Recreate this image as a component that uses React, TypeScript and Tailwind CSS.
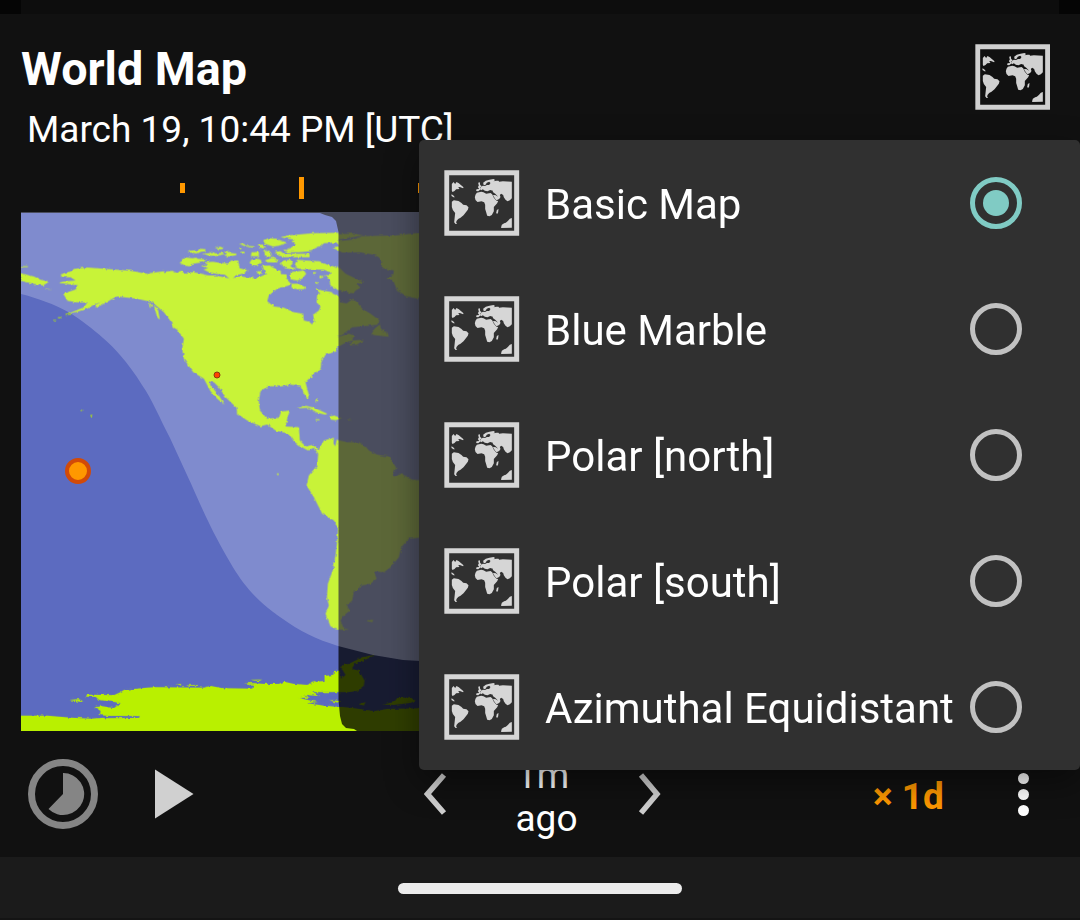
import React from "react";

const CONTINENTS =
  "M120 207L150 198 165 190 200 186 240 189 330 196 385 206 420 201 455 196 470 203 480 196 490 202 520 200 560 209 600 213 630 220 660 213 710 219 722 212 740 205 732 190 745 180 765 190 778 205 795 207 797 218 812 232 805 240 770 250 745 270 740 287 760 303 790 307 820 320 848 325 850 345 866 349 875 357 881 345 878 328 895 315 900 303 888 290 890 270 905 260 930 262 955 272 960 290 978 294 998 280 1012 293 1025 310 1050 325 1077 345 1070 358 1030 362 995 365 975 380 950 395 985 385 1000 390 995 405 975 412 950 425 948 437 915 448 902 470 900 490 875 510 855 530 860 550 867 575 860 580 848 560 840 543 810 537 780 543 750 542 735 547 720 557 715 585 718 615 740 640 775 637 782 618 808 615 800 640 795 663 835 665 838 705 855 723 880 718 895 733 910 705 940 697 939 715 945 722 948 703 980 710 1015 710 1035 723 1045 735 1070 748 1105 753 1127 787 1115 810 1125 815 1140 803 1175 823 1210 825 1210 995 1165 1000 1142 1025 1135 1055 1110 1085 1090 1100 1060 1097 1068 1120 1050 1135 1020 1140 1012 1155 1000 1155 995 1185 978 1200 988 1215 970 1230 960 1245 968 1265 985 1273 960 1273 930 1263 915 1225 925 1200 919 1175 922 1135 940 1085 948 1025 953 965 940 945 905 925 880 875 858 840 865 810 890 780 893 745 880 727 862 735 835 720 820 707 805 685 765 675 740 657 720 662 680 645 650 625 648 607 615 575 595 545 580 530 565 527 575 545 595 570 612 598 590 580 570 557 550 520 518 500 490 460 485 430 490 400 460 360 430 320 395 290 350 280 290 273 260 285 225 295 200 310 140 328 150 322 190 305 200 292 165 290 140 285 128 265 165 252 172 240 115 232 130 228 165 225 150 215 125 215Z";

const ISLANDS = [
  "M0 203L40 213 60 223 85 229 68 240 45 236 0 226Z",
  "M0 182H22V185H0Z",
  "M75 250L95 253 75 252Z",
  "M225 298L240 290 275 272 280 277 262 288 240 300 225 306Z",
  "M385 290L395 300 388 308ZM400 300L412 310 418 343 410 335Z",
  "M455 360L480 366 500 375 502 390 495 392 485 378 462 368Z",
  "M385 203L430 197 430 202 390 207Z",
  "M935 88L1000 84 1028 90 960 101 935 102ZM945 108L1000 102 1025 92 1080 91 1120 91 1210 80V270L1190 279 1160 273 1130 255 1118 225 1098 218 1118 208 1120 195 1088 188 1082 177 1085 168 1075 155 1060 148 1020 140 965 141 935 126 958 122Z",
  "M950 180L975 205 1000 217 1028 229 1010 237 1020 247 1005 255 998 264 950 252Z",
  "M1062 370L1078 357 1082 374 1100 380 1105 394 1052 388ZM995 405L1030 403 1010 417 990 420Z",
  "M828 608L850 601 880 606 920 625 915 628 890 622 865 607Z",
  "M930 632L940 630 965 639 945 644 930 642ZM885 641H897V644H885ZM982 642L995 644 980 645ZM885 582H889V590H885Z",
  "M1038 1245L1058 1243 1055 1250Z",
  "M181 612H184V617H181ZM210 628H214V634H210ZM770 803H774V809H770Z",
  "M135 325H151V328H135ZM114 334L122 338 112 338ZM101 343H106V346H101Z",
];

const ARCTIC_WEST = [
  "M36 80L48 75 68 74 72 70 90 71 90 77 76 79 66 84Z",
  "M118 67L135 64 144 68 132 72Z",
  "M82 84L100 83 110 79 120 84 142 82 145 86 120 92 98 90Z",
  "M145 78L154 76 162 82 182 84 182 89 160 93 146 90 155 84Z",
  "M12 112L22 105 18 98 30 96 52 98 62 96 66 100 92 102 82 110 52 115 42 123 28 120Z",
  "M88 110L112 109 130 112 158 114 166 106 188 105 192 128 215 134 212 142 180 150 168 165 155 154 148 148 120 145 100 140 84 132 98 128 76 121 95 117Z",
  "M98 150H128L130 154 100 156Z",
  "M190 55L205 55 210 60 235 63 232 67 208 62ZM192 66H197V71H192ZM195 79H207V84H195Z",
  "M228 80H250V92H226ZM250 60L265 58 264 68 252 66ZM265 42L272 42 272 52 265 52ZM262 76L272 72V82Z",
  "M228 103L250 100 255 110 245 122 230 120 222 112Z",
];

const ARCTIC_EAST = [
  "M75 50L95 45 130 42 170 38 250 37V65L205 68 198 75 178 84 165 92 130 95 98 95 85 90 108 80 120 72 108 62 118 58 100 55Z",
  "M25 60L38 53 62 55 82 62 95 67 72 75 52 78 28 70Z",
  "M5 74L18 72 32 80 22 83ZM0 94H8V106H0ZM26 96L40 90 48 100 44 110 30 106ZM58 94L75 92 85 100 162 100V110H90L70 106Z",
  "M72 130L84 120 105 118 112 128 104 138 122 144 112 148 92 143Z",
  "M118 132L125 118 150 120 192 122 205 130 235 138 250 145V210L225 195 222 178 205 164 222 164 225 156 205 148 170 146 140 148 122 142Z",
  "M105 155L145 150 152 160 140 175 125 180 105 176Z",
  "M108 190H128L150 200 145 206 125 206 108 202ZM174 155H181V160H174ZM192 166H202V173H192ZM180 185H187V190H180ZM180 205L200 210 230 215 230 225 195 220Z",
  "M28 120L50 112 72 120 58 126 35 125ZM20 135L45 136 55 150 75 150 78 170 30 158ZM5 152H20V160H5ZM0 122L15 117 18 124 5 132Z",
];

const ANTARCTICA =
  "M0 1530L80 1530 150 1536 210 1539 245 1537 270 1532 238 1529 240 1516 222 1505 245 1502 280 1508 300 1493 235 1483 225 1474 195 1473 200 1467 280 1469 300 1460 310 1453 380 1446 405 1445 550 1446 570 1441 605 1448 695 1449 700 1439 670 1432 700 1433 730 1435 775 1435 790 1428 820 1435 860 1438 880 1430 912 1426 912 1411 938 1408 940 1397 957 1395 962 1420 975 1408 968 1397 960 1380 985 1375 1025 1355 1063 1348 1040 1360 1005 1372 993 1390 1015 1395 1032 1425 1030 1440 1010 1456 985 1460 900 1460 875 1460 900 1472 875 1476 835 1477 890 1490 910 1500 958 1503 1000 1508 1060 1517 1100 1510 1210 1508V1590H0Z";

const ANTARCTIC_ISLANDS =
  "M145 1483L175 1481 188 1487 180 1489ZM465 1435L485 1436 480 1440ZM500 1438L530 1438 528 1441 505 1440ZM690 1422L725 1422 715 1427ZM1085 1497L1120 1490 1130 1478 1170 1475 1185 1485 1170 1492 1120 1498ZM1015 1495L1035 1490 1030 1500ZM870 1430L885 1426 882 1437ZM925 1482L960 1487 950 1491Z";

const INLETS =
  "M850 1468L960 1476V1485L880 1482ZM860 1493L960 1482 958 1503 910 1500ZM245 1531L358 1532 355 1537 250 1538Z";

function WorldMap() {
  return (
    <svg className="block h-[519px] w-[1038px]" viewBox="21 212 1038 519">
      <defs>
        <filter id="coast" x="0" y="200" width="1060" height="540" filterUnits="userSpaceOnUse">
          <feTurbulence type="fractalNoise" baseFrequency="0.25" numOctaves="2" seed="4" result="n" />
          <feDisplacementMap in="SourceGraphic" in2="n" scale="3" xChannelSelector="R" yChannelSelector="G" />
        </filter>
      </defs>
      <rect x="21" y="212" width="1038" height="519" fill="#5c6bc0" />
      <g filter="url(#coast)" transform="translate(0.500 0.500)">
        <g transform="translate(20 205) scale(.33333)" fill="#b9f000">
          <path d={CONTINENTS} />
          {ISLANDS.map((d) => (
            <path key={d} d={d} />
          ))}
          <g transform="translate(465 60)">
            {ARCTIC_WEST.map((d) => (
              <path key={d} d={d} />
            ))}
          </g>
          <g transform="translate(705 45)">
            {ARCTIC_EAST.map((d) => (
              <path key={d} d={d} />
            ))}
          </g>
          <path d={ANTARCTICA} />
          <path d={INLETS} fill="#5c6bc0" />
          <path d={ANTARCTIC_ISLANDS} />
        </g>
      </g>
      <path
        d="M21 212H1059V731H357L354 729 346 728 342 724 340 716 338.500 700V232L336 221 332 217 325 215 320 213H21Z"
        fill="#000"
        fillOpacity=".75"
      />
      <path
        d="M21 212H1059V661H420L403 660 373 655 338 646C316 639 301 632 280 617C250 596 238 577 223 550C204 515 197 496 187 475L170 438C160 419 152 399 142 385C131 367 117 350 103 338C93 329 80 319 70 313C54 304 37 298 21 294Z"
        fill="#fff"
        fillOpacity=".22"
      />
      <circle cx="217" cy="375" r="3" fill="#ff4400" stroke="#8a3a10" strokeWidth="1" />
      <circle cx="78" cy="471" r="11" fill="#ff9800" stroke="#d24a08" strokeWidth="4" />
    </svg>
  );
}

function MapIcon({ className }: { className: string }) {
  return (
    <svg className={className} viewBox="24.500 30 226.500 198" fill="currentColor">
      <path fillRule="evenodd" d="M25.500 31H250V227H25.500ZM40 46V212H235V46Z" />
      <path d="M48 72L53 66 58 72 62 66 69 70 76 76 83 82 82 85 72 81 67 82 71 87 61 88 56 93 50 96 48 92Z" />
      <path d="M47 103L52 106 57 112 53 112 47 108Z" />
      <path d="M48 125L54 121 68 123 77 129 82 134 92 136 98 142 96 149 89 158 83 166 74 173 67 177 62 183 61 188 64 191 59 192 55 187 57 168 58 159 51 150 48 141Z" />
      <path d="M123 98L136 95 143 97 151 101 164 99 169 103 174 113 182 122 187 123 184 130 174 141 174 154 168 165 161 169 154 167 151 157 148 147 148 134 145 127 137 124 125 126 119 120 117 112 119 104Z" />
      <path d="M127 68L132 67 133 75 138 79 132 83 138 87 132 90 127 94 121 93 122 88 130 87 126 81 129 77Z" />
      <path d="M134 82L141 77 148 78 153 75 160 75 164 69 160 65 153 68 148 76 143 74 142 68 150 62 161 59 173 57 178 60 173 64 182 62 188 62 190 65 201 64 228 65 228 115 222 121 215 124 209 119 204 112 202 105 196 101 192 105 194 111 190 117 182 121 178 116 171 106 178 105 187 110 179 102 171 96 171 92 163 90 155 94 147 92 141 88 136 91Z" />
      <path d="M183 150L188 147 187 157 184 162 181 159ZM196 201L198 194 205 190 210 188 216 183 222 176 228 174 228 203 196 204Z" />
    </svg>
  );
}

function Radio({ checked }: { checked: boolean }) {
  return (
    <span
      className={
        "flex size-[52px] shrink-0 items-center justify-center rounded-full border-[5px] " +
        (checked ? "border-[#80cbc4]" : "border-[#c1c1c1]")
      }
    >
      {checked && <span className="size-[26px] rounded-full bg-[#80cbc4]" />}
    </span>
  );
}

const OPTIONS = ["Basic Map", "Blue Marble", "Polar [north]", "Polar [south]", "Azimuthal Equidistant"];

export default function App() {
  return (
    <div className="relative flex h-[920px] w-[1080px] flex-col overflow-hidden bg-[#111111] font-['Roboto',sans-serif] text-white">
      <div className="h-[14px] shrink-0 bg-[#050505] px-[21px]">
        <div className="h-full bg-[#0d0d0d]" />
      </div>

      <header className="flex h-[156px] shrink-0 justify-between pr-[30px] pl-[21px] pt-[27px]">
        <div className="whitespace-nowrap">
          <h1 className="text-[46.700px] leading-[56px] font-bold">World Map</h1>
          <p className="mt-[11px] pl-[6px] text-[37px] leading-[44px]">March 19, 10:44 PM [UTC]</p>
        </div>
        <MapIcon className="mt-[3px] h-[66px] w-[75.500px] text-[#d0d0d0]" />
      </header>

      <div className="flex h-[42px] shrink-0 pl-[180px] pt-[7px]">
        <span className="mt-[6px] h-[10px] w-[5px] bg-[#ff9800]" />
        <span className="ml-[114px] h-[22px] w-[5px] bg-[#ff9800]" />
        <span className="ml-[114px] mt-[6px] h-[10px] w-[5px] bg-[#ff9800]" />
      </div>

      <div className="h-[519px] shrink-0 px-[21px]">
        <WorldMap />
      </div>

      <div className="flex h-[126px] shrink-0 items-center pl-[28px]">
        <svg className="size-[70px] shrink-0" viewBox="0 0 70 70">
          <circle cx="35" cy="35" r="31.500" fill="none" stroke="#858585" strokeWidth="7" />
          <path d="M35 35V14A21 21 0 1 1 20.500 50Z" fill="#858585" />
        </svg>
        <svg className="ml-[57px] h-[50px] w-[39px] shrink-0" viewBox="0 0 39 50">
          <path d="M0 0.500L38.500 25 0 49.500Z" fill="#d0d0d0" />
        </svg>
        <svg className="ml-[230px] h-[42px] w-[23px] shrink-0" viewBox="0 0 23 42" fill="none">
          <path d="M20 2L3.500 21 20 40" stroke="#d0d0d0" strokeWidth="5.500" />
        </svg>
        <div className="mt-[5px] flex w-[191px] shrink-0 flex-col items-center text-[37px] leading-[43px]">
          <span>1m</span>
          <span className="pl-[8px]">ago</span>
        </div>
        <svg className="h-[42px] w-[23px] shrink-0" viewBox="0 0 23 42" fill="none">
          <path d="M3 2L19 21 3 40" stroke="#d0d0d0" strokeWidth="5.500" />
        </svg>
        <div className="mt-[4px] ml-[212px] w-[75px] shrink-0 text-[37px] leading-[43px] font-bold whitespace-nowrap text-[#ff9800]">
          × 1d
        </div>
        <div className="ml-[70px] flex flex-col gap-[5px]">
          <span className="size-[11px] rounded-full bg-white" />
          <span className="size-[11px] rounded-full bg-white" />
          <span className="size-[11px] rounded-full bg-white" />
        </div>
      </div>

      <div className="absolute top-[140px] left-[419px] flex h-[630px] w-[661px] flex-col rounded-[5px] bg-[#303030] shadow-[0_12px_34px_rgba(0,0,0,0.42)]">
        {OPTIONS.map((name, i) => (
          <div key={name} className="flex h-[126px] items-center pr-[58px] pl-[25px]">
            <MapIcon className="h-[66px] w-[75.500px] shrink-0 text-[#d6d6d6]" />
            <span className="ml-[25.500px] flex-1 pt-[4px] text-[42px] leading-[50px] whitespace-nowrap">{name}</span>
            <Radio checked={i === 0} />
          </div>
        ))}
      </div>

      <div className="relative flex h-[63px] shrink-0 items-center justify-center border-b-2 border-[#141414] bg-[#1b1b1b]">
        <div className="mt-[2px] h-[11px] w-[284px] rounded-full bg-[#ececec]" />
      </div>
    </div>
  );
}
